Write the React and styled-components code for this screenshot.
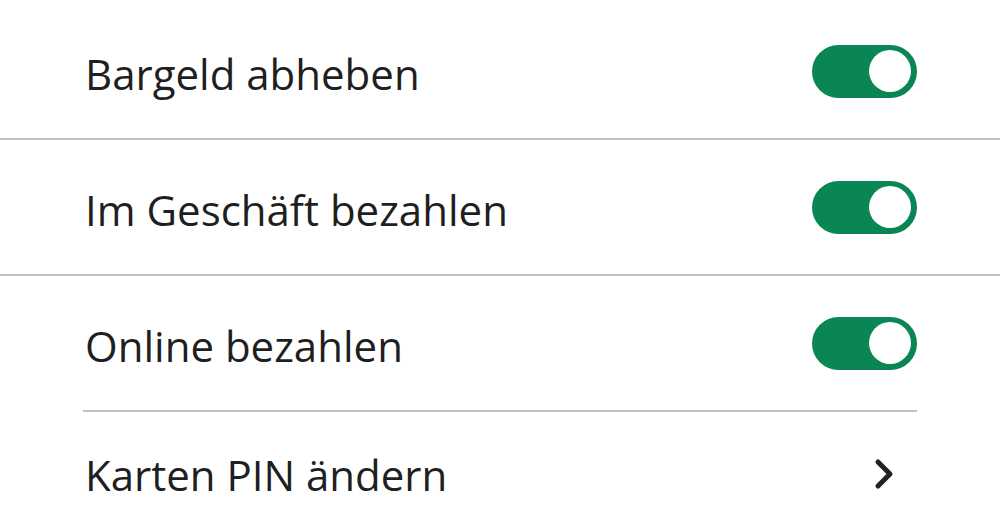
import React from "react";
import styled, { createGlobalStyle } from "styled-components";

const Global = createGlobalStyle`
  html, body { margin: 0; padding: 0; background: #ffffff; }
  body { font-family: "Open Sans", "Noto Sans", sans-serif; }
`;

const List = styled.div`
  display: flex;
  flex-direction: column;
  padding-top: 4px;
  width: 1000px;
`;

const Row = styled.div`
  display: flex;
  align-items: center;
  justify-content: space-between;
  height: ${(p) => p.$h || 134}px;
  padding: 0 83px 0 85px;
  border-bottom: ${(p) => (p.$divider === "full" ? "2px solid #bfbfbf" : "none")};
  box-sizing: content-box;
`;

const InsetDivider = styled.div`
  height: 2px;
  background: #bfbfbf;
  margin: 0 83px 0 83px;
`;

const Label = styled.span`
  font-size: 42px;
  color: #1f1f1f;
  line-height: 1;
  transform: translateY(3px);
`;

const Track = styled.div`
  position: relative;
  width: 105px;
  height: 53px;
  border-radius: 27px;
  background: #0a8554;
  flex-shrink: 0;
`;

const Knob = styled.div`
  position: absolute;
  top: 5.5px;
  right: 6px;
  width: 42px;
  height: 42px;
  border-radius: 50%;
  background: #ffffff;
`;

const Chevron = styled.svg`
  width: 24px;
  height: 34px;
  margin-right: 20px;
  transform: translateY(2px);
  flex-shrink: 0;
`;

const Toggle = () => (
  <Track>
    <Knob />
  </Track>
);

export default function App() {
  return (
    <>
      <Global />
      <List>
        <Row $divider="full">
          <Label>Bargeld abheben</Label>
          <Toggle />
        </Row>
        <Row $divider="full">
          <Label>Im Geschäft bezahlen</Label>
          <Toggle />
        </Row>
        <Row>
          <Label>Online bezahlen</Label>
          <Toggle />
        </Row>
        <InsetDivider />
        <Row $h={120}>
          <Label>Karten PIN ändern</Label>
          <Chevron viewBox="0 0 24 34" fill="none">
            <path
              d="M5 5 L17 17 L5 29"
              stroke="#222222"
              strokeWidth="5"
              strokeLinecap="round"
              strokeLinejoin="round"
            />
          </Chevron>
        </Row>
      </List>
    </>
  );
}
